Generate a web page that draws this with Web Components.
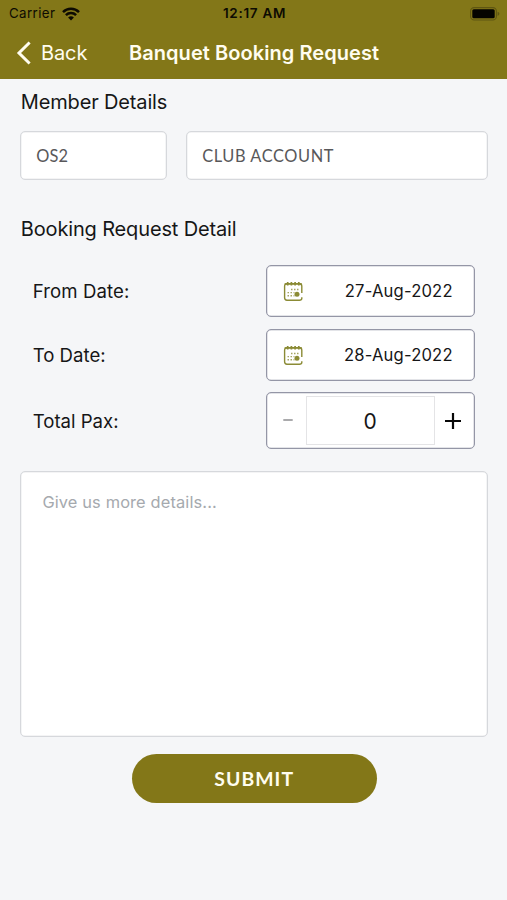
<!DOCTYPE html>
<html lang="en">
<head>
<meta charset="utf-8">
<title>Banquet Booking Request</title>
<style>
html,body{margin:0;height:100%}
body{background:#f5f6f8;color:#161617;font-family:Inter,"Liberation Sans",sans-serif;overflow:hidden}
</style>
</head>
<body>
<booking-screen></booking-screen>
<script>
const define = (name, html) => {
  const template = document.createElement('template');
  template.innerHTML = html;
  customElements.define(name, class extends HTMLElement {
    constructor() {
      super();
      this.attachShadow({mode: 'open'}).appendChild(template.content.cloneNode(true));
    }
  });
};

define('status-bar', `
<style>
:host{display:grid;grid-template-columns:1fr auto 1fr;align-items:center;height:27px;padding:0 7px 0 9px;box-sizing:border-box;color:#0d0b02;font-size:13.3px;line-height:27px}
.left{display:flex;align-items:center;gap:6.5px}
.carrier{letter-spacing:.4px}
.time{font-weight:600;font-size:13.5px;letter-spacing:.7px}
.battery{justify-self:end}
svg{display:block}
</style>
<div class="left"><span class="carrier">Carrier</span>
<svg width="18" height="14" viewBox="0 0 18 14" fill="none" stroke="#0d0b02" stroke-width="2.5"><path d="M1 5.1A11.4 11.4 0 0 1 17 5.1M3.9 8.2A7.2 7.2 0 0 1 14.1 8.2"/><path d="M9 13.6L6.1 10.6A4.1 4.1 0 0 1 11.9 10.6Z" fill="#0d0b02" stroke="none"/></svg></div>
<span class="time">12:17 AM</span>
<svg class="battery" width="30" height="14" viewBox="0 0 30 14"><rect x=".6" y=".6" width="25.8" height="12.4" rx="3.6" fill="none" stroke="#5f5612" stroke-width="1.1"/><rect x="2.3" y="2.3" width="22.4" height="9" rx="1.5" fill="#050400"/><path d="M27.6 4.7Q29.4 5.3 29.4 6.8T27.6 8.9Z" fill="#5f5612"/></svg>`);

define('nav-bar', `
<style>
:host{display:flex;align-items:center;height:52px;box-sizing:border-box;padding:0 0 0 16px;color:#fffdf0;white-space:nowrap}
svg{display:block;flex:none}
.back{font-size:20px;margin-left:10px;width:88px;letter-spacing:-.1px}
.title{font-size:20px;font-weight:600;letter-spacing:.06px}
</style>
<svg width="15" height="24" viewBox="0 0 15 24" fill="none" stroke="#fffdf0" stroke-width="3"><path d="M13.6 1.5L3 12L13.6 22.5"/></svg>
<span class="back">Back</span><span class="title"><slot></slot></span>`);

define('section-title', `
<style>:host{display:block;font-size:20px;line-height:26px;letter-spacing:-.15px;white-space:nowrap}</style><slot></slot>`);

define('read-field', `
<style>:host{display:block;box-sizing:border-box;height:49px;border:1px solid #d6d8dc;box-shadow:inset 0 0 0 .5px #e9eaec;border-radius:5px;background:#fff;padding-left:14.8px;font:16.4px/47px Lato,"Liberation Sans",sans-serif;color:#58585a;letter-spacing:var(--track,.2px)}</style><slot></slot>`);

define('form-row', `
<style>
:host{display:flex;justify-content:space-between;align-items:center;padding:0 12.8px 0 12.3px}
.label{font-size:18.6px;letter-spacing:var(--track,.1px);white-space:nowrap}
</style><span class="label"><slot name="label"></slot></span><slot></slot>`);

define('date-field', `
<style>
:host{display:flex;align-items:center;justify-content:space-between;box-sizing:border-box;width:209px;height:52px;border:1px solid #9496a6;box-shadow:inset 0 0 0 .5px #c8c9d2;border-radius:5px;background:#fff;padding:0 21px 0 16px;font-size:16.6px}
svg{display:block}
span{letter-spacing:.18px}
</style>
<svg width="21" height="21" viewBox="0 0 21 21" fill="none" stroke="#8b8b35" stroke-width="1.4">
<path d="M18.8 12V5.2Q18.8 2.8 16.4 2.8H4Q1.6 2.8 1.6 5.2V16.8Q1.6 19.2 4 19.2H16.4Q18.8 19.2 18.8 17.6V16.2"/>
<path d="M1.6 2.9H18.8" stroke-width="1.5"/>
<path d="M4.7 1V4.6M8.4 1V4.6M12.1 1V4.6M15.8 1V4.6" stroke-width="1.7"/>
<path d="M8 8.5H17M4.5 11.6H11.5M4.5 14.7H11.5" stroke-dasharray="1.5 1.5" stroke="#a5a563"/>
<circle cx="14" cy="13.2" r="2.5" fill="#8b8b35" stroke="none"/></svg>
<span><slot></slot></span>`);

define('pax-stepper', `
<style>
:host{display:grid;grid-template-columns:39px 129px 1fr;align-items:center;box-sizing:border-box;width:209px;height:57px;border:1px solid #9496a6;box-shadow:inset 0 0 0 .5px #c8c9d2;border-radius:5px;background:#fff}
.value{height:49px;box-sizing:border-box;border:1px solid #e4e4e6;text-align:center;font-size:21px;line-height:50px}
svg{display:block;justify-self:center}
.plus{margin-right:3px}
</style>
<svg width="10" height="6" viewBox="0 0 10 6" style="margin-left:4px"><path d="M0.3 2H9.7" stroke="#aaaaac" stroke-width="2"/></svg>
<div class="value"><slot></slot></div>
<svg class="plus" width="16" height="16" viewBox="0 0 16 16" stroke="#080808" stroke-width="2.2"><path d="M0 8H16M8 0V16"/></svg>`);

define('details-box', `
<style>:host{display:block;box-sizing:border-box;height:266px;border:1px solid #d6d8dc;box-shadow:inset 0 0 0 .5px #e9eaec;border-radius:5px;background:#fff;padding:18px 21px;font-size:16.4px;line-height:24px;color:#a5a9ae;letter-spacing:.13px}</style><slot></slot>`);

define('submit-button', `
<style>:host{display:block;width:245px;height:49px;border-radius:25px;background:#837718;color:#fffdf0;text-align:center;font:700 19.4px/49px Lato,"Liberation Sans",sans-serif;letter-spacing:1.05px}</style><slot></slot>`);

define('booking-screen', `
<style>
:host{display:block;height:100vh}
header{background:#837718;height:79px}
main{display:flex;flex-direction:column;padding:10px 19.5px 0 20.4px}
section-title{padding-left:.4px}
.member{display:grid;grid-template-columns:147px 1fr;gap:19px;margin-top:16px}
.name{--track:.58px}
.booking{margin-top:36px}
.rows{display:flex;flex-direction:column;gap:12px;margin-top:23px}
.pax{margin-top:-1px;--track:0}
.to{--track:0}
details-box{margin-top:22px}
submit-button{align-self:center;margin:17px 0 0 .5px}
</style>
<header><status-bar></status-bar><nav-bar>Banquet Booking Request</nav-bar></header>
<main>
<section-title>Member Details</section-title>
<div class="member"><read-field>OS2</read-field><read-field class="name">CLUB ACCOUNT</read-field></div>
<section-title class="booking">Booking Request Detail</section-title>
<div class="rows">
<form-row><span slot="label">From Date:</span><date-field>27-Aug-2022</date-field></form-row>
<form-row class="to"><span slot="label">To Date:</span><date-field>28-Aug-2022</date-field></form-row>
<form-row class="pax"><span slot="label">Total Pax:</span><pax-stepper>0</pax-stepper></form-row>
</div>
<details-box>Give us more details...</details-box>
<submit-button>SUBMIT</submit-button>
</main>`);
</script>
</body>
</html>
